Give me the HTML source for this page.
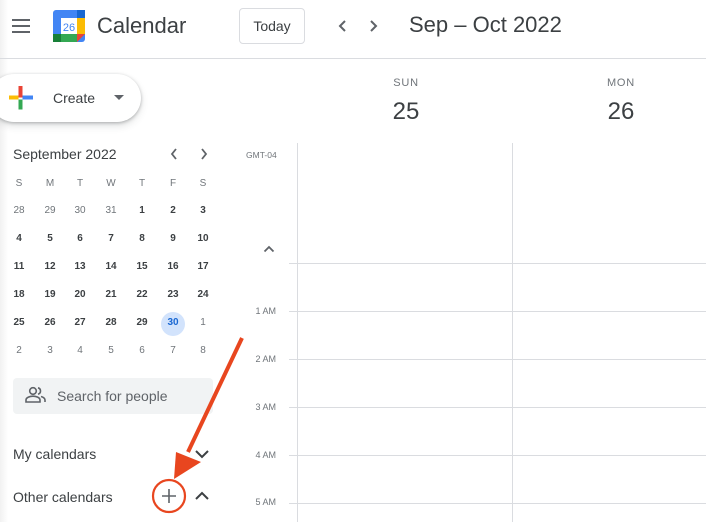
<!DOCTYPE html>
<html><head><meta charset="utf-8"><style>
*{margin:0;padding:0;box-sizing:border-box}
body{width:706px;height:522px;overflow:hidden;background:#fff;font-family:"Liberation Sans",Arial,sans-serif;color:#3c4043;position:relative}
.a{position:absolute}
.mc{position:absolute;width:20px;text-align:center;font-size:10px;font-weight:bold;color:#3c4043;line-height:12px}
.g{color:#70757a;font-weight:normal}
.h{color:#70757a;font-weight:normal;font-size:10px}
.hl{position:absolute;left:289px;width:417px;height:1px;background:#dadce0}
.tl{position:absolute;left:246px;width:36px;text-align:right;font-size:9px;color:#70757a}
</style></head><body>
<div class="a" style="left:0;top:0;width:8px;height:522px;background:linear-gradient(90deg,#f1f1f1,#fff)"></div>
<div class="a" style="left:12px;top:19px;width:18px;height:2px;background:#5f6368"></div>
<div class="a" style="left:12px;top:25px;width:18px;height:2px;background:#5f6368"></div>
<div class="a" style="left:12px;top:31px;width:18px;height:2px;background:#5f6368"></div>
<svg class="a" style="left:53px;top:10px" width="32" height="32" viewBox="0 0 32 32">
<rect x="0" y="0" width="32" height="32" rx="3" fill="#4285f4"/>
<rect x="24" y="0" width="8" height="8" fill="#1967d2"/>
<rect x="24" y="8" width="8" height="16" fill="#fbbc04"/>
<rect x="0" y="24" width="24" height="8" fill="#34a853"/>
<rect x="0" y="24" width="8" height="8" fill="#188038"/>
<polygon points="24,24 32,24 24,32" fill="#ea4335"/>
<rect x="8" y="8" width="16" height="16" fill="#fff"/>
<text x="16" y="21" font-size="11" text-anchor="middle" fill="#4285f4" font-family="Liberation Sans">26</text>
</svg>
<div class="a" style="left:97px;top:13px;font-size:22px;color:#3c4043">Calendar</div>
<div class="a" style="left:239px;top:8px;width:66px;height:36px;border:1px solid #dadce0;border-radius:4px;font-size:14px;text-align:center;line-height:34px;color:#3c4043">Today</div>
<svg class="a" style="left:333px;top:18px" width="50" height="16"><path d="M12 3 L7 8 L12 13" stroke="#5f6368" stroke-width="2" fill="none"/><path d="M38 3 L43 8 L38 13" stroke="#5f6368" stroke-width="2" fill="none"/></svg>
<div class="a" style="left:409px;top:12px;font-size:22px;color:#3c4043">Sep – Oct 2022</div>
<div class="a" style="left:0;top:58px;width:706px;height:1px;background:#dadce0"></div>
<div class="a" style="left:-10px;top:74px;width:151px;height:48px;border-radius:24px;background:#fff;box-shadow:0 1px 3px rgba(60,64,67,.35),0 4px 8px rgba(60,64,67,.15)"></div>
<svg class="a" style="left:9px;top:86px" width="24" height="24"><rect x="9.5" y="0" width="4" height="11.5" fill="#ea4335"/><rect x="13.5" y="9.5" width="11" height="4" fill="#4285f4"/><rect x="9.5" y="13.5" width="4" height="10" fill="#34a853"/><rect x="0" y="9.5" width="9.5" height="4" fill="#fbbc04"/></svg>
<div class="a" style="left:53px;top:90px;font-size:14px;color:#3c4043">Create</div>
<svg class="a" style="left:114px;top:95px" width="10" height="6"><path d="M0 0 L10 0 L5 5Z" fill="#5f6368"/></svg>
<div class="a" style="left:13px;top:146px;font-size:14px;color:#3c4043">September 2022</div>
<svg class="a" style="left:167px;top:147px" width="45" height="14"><path d="M9 2 L5 7 L9 12" stroke="#5f6368" stroke-width="1.8" fill="none"/><path d="M35 2 L39 7 L35 12" stroke="#5f6368" stroke-width="1.8" fill="none"/></svg>
<div class="a" style="left:161px;top:312px;width:24px;height:24px;border-radius:12px;background:#d2e3fc"></div>
<div id="mc"></div>
<script>
var xs=[19,50,80,111,142,173,203];
var rows=[["S","M","T","W","T","F","S"],["28","29","30","31","1","2","3"],["4","5","6","7","8","9","10"],["11","12","13","14","15","16","17"],["18","19","20","21","22","23","24"],["25","26","27","28","29","30","1"],["2","3","4","5","6","7","8"]];
var ys=[184,211,239,267,295,323,351];
var h="";
for(var r=0;r<7;r++)for(var c=0;c<7;c++){var cl="mc";
if(r==0)cl+=" h";else if((r==1&&c<4)||(r==5&&c==6)||r==6)cl+=" g";
var st="left:"+(xs[c]-10)+"px;top:"+(ys[r]-6)+"px";if(r==5&&c==5)st+=";color:#1967d2";
h+='<div class="'+cl+'" style="'+st+'">'+rows[r][c]+'</div>';}
document.getElementById("mc").innerHTML=h;
</script>
<div class="a" style="left:13px;top:378px;width:200px;height:36px;background:#f1f3f4;border-radius:4px"></div>
<svg class="a" style="left:25px;top:386px" width="22" height="18" viewBox="0 0 22 18"><circle cx="8" cy="5" r="3.3" stroke="#5f6368" stroke-width="1.6" fill="none"/><path d="M1 16 v-2 c0-2.5 4-3.8 7-3.8 s7 1.3 7 3.8 v2z" stroke="#5f6368" stroke-width="1.6" fill="none"/><path d="M13 1.8 a3.3 3.3 0 0 1 0 6.4 M16 10.5 c2 .6 4 1.6 4 3.5 v2" stroke="#5f6368" stroke-width="1.6" fill="none"/></svg>
<div class="a" style="left:57px;top:388px;font-size:14px;color:#5f6368">Search for people</div>
<div class="a" style="left:13px;top:446px;font-size:14px;color:#3c4043">My calendars</div>
<svg class="a" style="left:194px;top:449px" width="16" height="10"><path d="M2 2 L8 8 L14 2" stroke="#3c4043" stroke-width="2" fill="none"/></svg>
<div class="a" style="left:13px;top:489px;font-size:14px;color:#3c4043">Other calendars</div>
<svg class="a" style="left:194px;top:491px" width="16" height="10"><path d="M2 8 L8 2 L14 8" stroke="#3c4043" stroke-width="2" fill="none"/></svg>
<svg class="a" style="left:160px;top:487px" width="18" height="18"><path d="M9 2 V16 M2 9 H16" stroke="#5f6368" stroke-width="1.6"/></svg>
<div class="a" style="left:388px;top:77px;width:36px;text-align:center;font-size:11px;color:#70757a;letter-spacing:.8px">SUN</div>
<div class="a" style="left:380px;top:98px;width:52px;text-align:center;font-size:24px;color:#3c4043">25</div>
<div class="a" style="left:601px;top:77px;width:40px;text-align:center;font-size:11px;color:#70757a;letter-spacing:.8px">MON</div>
<div class="a" style="left:595px;top:98px;width:52px;text-align:center;font-size:24px;color:#3c4043">26</div>
<div class="a" style="left:246px;top:150px;font-size:8.5px;color:#70757a">GMT-04</div>
<svg class="a" style="left:263px;top:245px" width="12" height="8"><path d="M1.5 6.5 L6 2 L10.5 6.5" stroke="#5f6368" stroke-width="1.8" fill="none"/></svg>
<div class="a" style="left:297px;top:143px;width:1px;height:379px;background:#dadce0"></div>
<div class="a" style="left:512px;top:143px;width:1px;height:379px;background:#dadce0"></div>
<div class="hl" style="top:263px"></div>
<div class="hl" style="top:311px"></div>
<div class="hl" style="top:359px"></div>
<div class="hl" style="top:407px"></div>
<div class="hl" style="top:455px"></div>
<div class="hl" style="top:503px"></div>
<div class="tl" style="left:240px;top:306px;background:#fff">1 AM</div>
<div class="tl" style="left:240px;top:354px;background:#fff">2 AM</div>
<div class="tl" style="left:240px;top:402px;background:#fff">3 AM</div>
<div class="tl" style="left:240px;top:450px;background:#fff">4 AM</div>
<div class="tl" style="left:240px;top:497px;background:#fff">5 AM</div>
<svg class="a" style="left:0;top:0" width="706" height="522">
<line x1="242" y1="338" x2="188" y2="452" stroke="#e8461f" stroke-width="4"/>
<polygon points="174,479 176,452 201,462" fill="#e8461f"/>
<circle cx="169" cy="496" r="16" stroke="#e8461f" stroke-width="2.2" fill="none"/>
</svg>
</body></html>
